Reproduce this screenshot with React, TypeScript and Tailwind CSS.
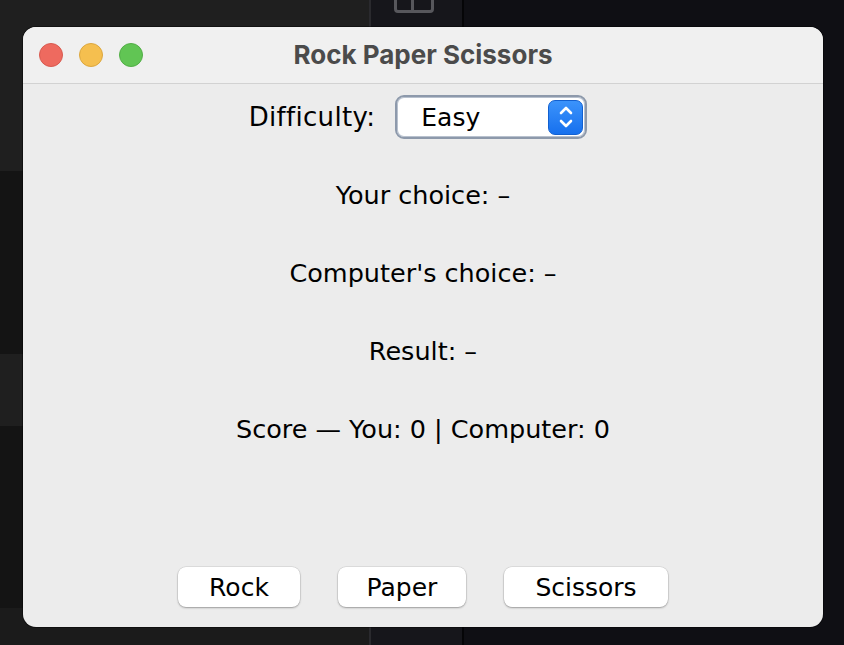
import React from "react";

const bodyFont = { fontFamily: '"DejaVu Sans", "Liberation Sans", sans-serif' };

export default function App() {
  return (
    <div className="relative w-[844px] h-[645px] overflow-hidden bg-[#0f0f14]">
      {/* desktop background */}
      <div className="flex h-full">
        <div className="flex flex-col w-[369px] h-full">
          <div className="h-[171px] bg-[#1f1f1f]" />
          <div className="h-[183px] bg-[#141414]" />
          <div className="h-[72px] bg-[#1f1f1f]" />
          <div className="h-[182px] bg-[#141414]" />
          <div className="flex-1 bg-[#1b1b1b]" />
        </div>
        <div className="w-[2px] h-full bg-[#2a2a2e]" />
        <div className="relative w-[91px] h-full bg-[#16161b]">
          <div className="absolute left-[23px] top-[-12px] w-[40px] h-[25px] rounded-[4px] border-[3px] border-[#57575c] flex">
            <div className="w-1/2 h-full border-r-[3px] border-[#57575c]" />
          </div>
        </div>
        <div className="w-[2px] h-full bg-[#050507]" />
        <div className="flex-1 bg-[#0f0f14]" />
      </div>

      {/* window */}
      <div className="absolute left-[23px] top-[27px] w-[800px] h-[600px] rounded-[13px] overflow-hidden flex flex-col bg-[#ececec] shadow-[0_0_0_1px_rgba(0,0,0,0.4)]">
        <div className="relative h-[57px] bg-[#f0f0f0] border-b border-[#d2d2d2] flex items-center justify-center shrink-0">
          <div className="absolute left-[16px] top-[16px] flex gap-[16px]">
            <div className="w-[24px] h-[24px] rounded-full bg-[#ee6a5f] border border-[#d85a50]" />
            <div className="w-[24px] h-[24px] rounded-full bg-[#f5bf4f] border border-[#dca73f]" />
            <div className="w-[24px] h-[24px] rounded-full bg-[#61c554] border border-[#52ae46]" />
          </div>
          <div
            className="text-[26px] font-bold text-[#4b4b4b] leading-none"
            style={{ fontFamily: '"Inter", "Liberation Sans", sans-serif' }}
          >
            Rock Paper Scissors
          </div>
        </div>

        <div className="flex-1 flex flex-col items-center text-black" style={bodyFont}>
          <div className="flex items-center gap-[20px] mt-[11px] mr-[10px]">
            <span className="text-[26px] leading-none tracking-[0.3px]">Difficulty:</span>
            <div className="w-[192px] h-[44px] rounded-[9px] border-[2px] border-[#8d99ab] bg-white flex items-center justify-between pl-[24px] pr-[2px] shadow-[inset_0_0_0_1px_#b8c1ce]">
              <span className="text-[25px] leading-none">Easy</span>
              <div className="w-[35px] h-[35px] rounded-[7px] bg-gradient-to-b from-[#3b93fb] to-[#1670ee] border border-[#1260d0] flex items-center justify-center">
                <svg width="18" height="26" viewBox="0 0 18 26" fill="none" stroke="white" strokeWidth="2.6" strokeLinecap="round" strokeLinejoin="round">
                  <path d="M4 9 L9 4 L14 9" />
                  <path d="M4 17 L9 22 L14 17" />
                </svg>
              </div>
            </div>
          </div>

          <div className="flex flex-col items-center gap-[49px] mt-[42px] text-[25.5px] leading-[29px]">
            <div>Your choice: –</div>
            <div>Computer's choice: –</div>
            <div>Result: –</div>
            <div>Score — You: 0 | Computer: 0</div>
          </div>

          <div className="flex-1" />

          <div className="flex gap-[38px] mb-[20px] text-[25px] leading-none">
            <button className="w-[122px] h-[40px] rounded-[8px] bg-white shadow-[0_1px_2px_rgba(0,0,0,0.3),0_0_0_0.5px_rgba(0,0,0,0.12)]">Rock</button>
            <button className="w-[128px] h-[40px] rounded-[8px] bg-white shadow-[0_1px_2px_rgba(0,0,0,0.3),0_0_0_0.5px_rgba(0,0,0,0.12)]">Paper</button>
            <button className="w-[164px] h-[40px] rounded-[8px] bg-white shadow-[0_1px_2px_rgba(0,0,0,0.3),0_0_0_0.5px_rgba(0,0,0,0.12)]">Scissors</button>
          </div>
        </div>
      </div>
    </div>
  );
}
